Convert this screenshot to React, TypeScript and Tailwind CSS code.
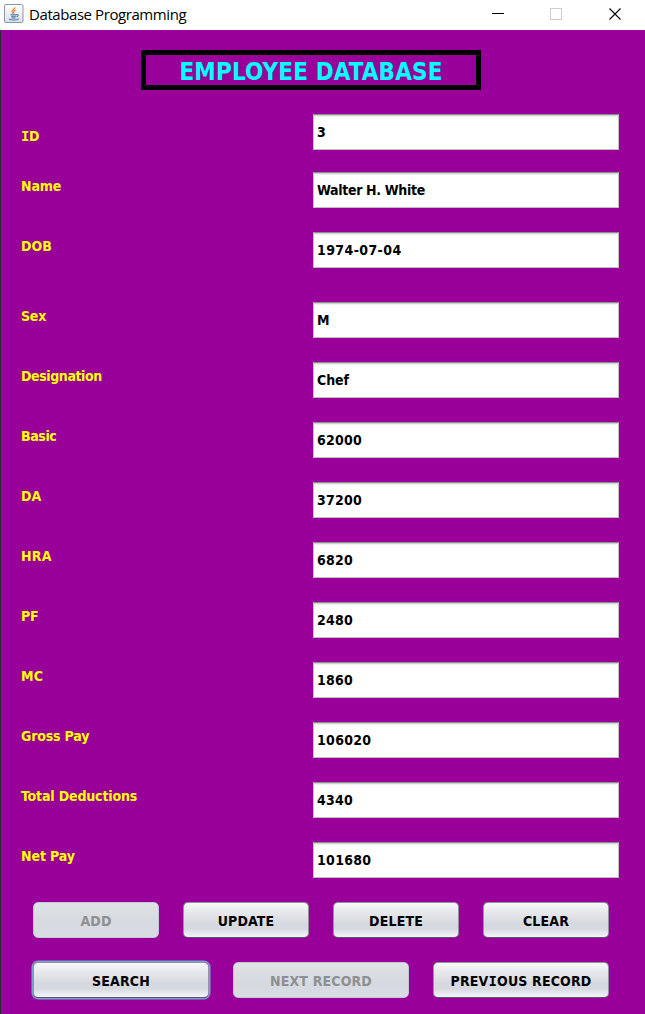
import type { ReactNode } from "react";

const FONT = "font-['DejaVu_Sans_Condensed','DejaVu_Sans',sans-serif] [font-stretch:condensed]";

/** Capital I with serifs, as bold form captions draw it. */
function SerifI() {
  return <span className="font-['DejaVu_Sans_Mono',monospace]">I</span>;
}

type Row = { label: ReactNode; value: string; gap: string; labelShift: string; tracking: string; valueTracking: string };

const rows: Row[] = [
  { label: <><SerifI />D</>, value: "3", gap: "mt-6", labelShift: "pt-2", tracking: "tracking-[-0.5px]", valueTracking: "tracking-[0.25px]" },
  { label: "Name", value: "Walter H. White", gap: "mt-[22px]", labelShift: "pb-2", tracking: "tracking-[-0.15px]", valueTracking: "tracking-[-0.33px]" },
  { label: "DOB", value: "1974-07-04", gap: "mt-6", labelShift: "pb-2", tracking: "tracking-[0.1px]", valueTracking: "tracking-[0.4px]" },
  { label: "Sex", value: "M", gap: "mt-[34px]", labelShift: "pb-2", tracking: "tracking-[-0.2px]", valueTracking: "tracking-[0px]" },
  { label: "Designation", value: "Chef", gap: "mt-6", labelShift: "pb-2", tracking: "tracking-[-0.4px]", valueTracking: "tracking-[-0.1px]" },
  { label: "Basic", value: "62000", gap: "mt-6", labelShift: "pb-2", tracking: "tracking-[-0.4px]", valueTracking: "tracking-[0.25px]" },
  { label: "DA", value: "37200", gap: "mt-6", labelShift: "pb-2", tracking: "tracking-[0px]", valueTracking: "tracking-[0.25px]" },
  { label: "HRA", value: "6820", gap: "mt-6", labelShift: "pb-2", tracking: "tracking-[0.3px]", valueTracking: "tracking-[0.25px]" },
  { label: "PF", value: "2480", gap: "mt-6", labelShift: "pb-2", tracking: "tracking-[-0.2px]", valueTracking: "tracking-[0.25px]" },
  { label: "MC", value: "1860", gap: "mt-6", labelShift: "pb-2", tracking: "tracking-[0.2px]", valueTracking: "tracking-[0.25px]" },
  { label: "Gross Pay", value: "106020", gap: "mt-6", labelShift: "pb-2", tracking: "tracking-[-0.17px]", valueTracking: "tracking-[0.3px]" },
  { label: "Total Deductions", value: "4340", gap: "mt-6", labelShift: "pb-2", tracking: "tracking-[-0.15px]", valueTracking: "tracking-[0.25px]" },
  { label: "Net Pay", value: "101680", gap: "mt-6", labelShift: "pb-2", tracking: "tracking-[-0.1px]", valueTracking: "tracking-[0.3px]" },
];

function FormRow({ row }: { row: Row }) {
  return (
    <div className={`flex h-9 ${row.gap}`}>
      <div className={`flex w-[292px] items-center whitespace-nowrap text-[#ffff00] ${row.labelShift} ${row.tracking}`}>
        <span>{row.label}</span>
      </div>
      <div
        className={`flex h-9 w-[306px] items-center border border-[#bfbfbf] border-t-[#8d8e8f] bg-white pl-[3px] text-black shadow-[inset_0_1px_0_#d4d4d4,inset_0_2px_0_#f0f0f0] ${row.valueTracking}`}
      >
        <span>{row.value}</span>
      </div>
    </div>
  );
}

type ButtonProps = { children: ReactNode; width: string; disabled?: boolean; focused?: boolean };

function FormButton({ children, width, disabled, focused }: ButtonProps) {
  const look = disabled
    ? "border-[#c3c8d0] bg-[linear-gradient(#dfe2e6,#d6d9df_60%,#d8dce5)] text-[#8e8f91]"
    : "border-[#92959d] border-b-[#535860] bg-[linear-gradient(#f8f9fa_0%,#e6e8eb_28%,#d6d9df_60%,#d6d9df_75%,#f3f5fa_100%)] text-black";
  const ring = focused ? "shadow-[0_0_0_1.5px_#73a4d1]" : "";
  return (
    <button
      disabled={disabled}
      className={`flex h-9 items-center justify-center whitespace-nowrap rounded-[5px] border pt-[2px] tracking-[0.15px] ${width} ${look} ${ring}`}
    >
      <span>{children}</span>
    </button>
  );
}

function JavaIcon() {
  return (
    <svg width="20" height="20" viewBox="0 0 20 20" fill="none">
      <defs>
        <linearGradient id="tile" x1="0" y1="0" x2="0" y2="1">
          <stop offset="0" stopColor="#ffffff" />
          <stop offset="1" stopColor="#d9e0e8" />
        </linearGradient>
      </defs>
      <rect x="0.5" y="0.5" width="18.5" height="18" rx="1.5" fill="url(#tile)" stroke="#8998a8" />
      <path d="M10.8 3.2C11.6 5 7 6.2 8.1 8.2L9.2 10M11.6 6.2C9.5 7.2 9.1 8 10 9.5" stroke="#ee8b45" strokeWidth="1.3" />
      <path d="M6.4 10.7H12.5M7 12.3H12M7.6 13.9H11.4M12.5 10.7C15 10.2 14.6 12.5 12.4 13M5 15C7 16.4 12.8 16.4 14.8 15" stroke="#527da2" strokeWidth="1.1" />
    </svg>
  );
}

function TitleBar() {
  return (
    <header className="flex h-[30px] items-start bg-white">
      <div className="ml-1 mt-1">
        <JavaIcon />
      </div>
      <h1 className="ml-[5px] mt-[4px] w-[463px] whitespace-nowrap font-['Open_Sans','Noto_Sans',sans-serif] text-[15px] leading-[21px] tracking-[-0.42px] text-black">
        Database Programming
      </h1>
      <svg className="mt-[7px]" width="133" height="14" viewBox="0 0 133 14" fill="none">
        <path d="M0 6.5H12" stroke="#000" />
        <rect x="58.5" y="1.5" width="11" height="11" stroke="#ccc" />
        <path d="M117.5 1.5L128.5 12.5M128.5 1.5L117.5 12.5" stroke="#000" strokeWidth="1.1" />
      </svg>
    </header>
  );
}

export default function App() {
  return (
    <div className="flex h-[1014px] w-[645px] flex-col overflow-hidden bg-[#990099]">
      <TitleBar />
      <main className={`flex-1 border-l border-[#2b2b2b] pl-5 text-[14px] font-bold leading-[17px] ${FONT}`}>
        <div className="ml-[120px] mt-5 flex h-10 w-[340px] items-center justify-center border-[5px] border-black pt-[3px] text-[24px] leading-[28px] tracking-[0.13px] text-[#00ffff]">
          <h2 className="whitespace-nowrap">EMPLOYEE DATABASE</h2>
        </div>
        <form>
          {rows.map((row) => (
            <FormRow key={row.value} row={row} />
          ))}
          <div className="ml-3 mt-6 flex gap-6">
            <FormButton width="w-[126px]" disabled>ADD</FormButton>
            <FormButton width="w-[126px]">UPDATE</FormButton>
            <FormButton width="w-[126px]">DELETE</FormButton>
            <FormButton width="w-[126px]">CLEAR</FormButton>
          </div>
          <div className="ml-3 mt-6 flex gap-6">
            <FormButton width="w-[176px]" focused>SEARCH</FormButton>
            <FormButton width="w-[176px]" disabled>NEXT RECORD</FormButton>
            <FormButton width="w-[176px]">PREV<SerifI />OUS RECORD</FormButton>
          </div>
        </form>
      </main>
    </div>
  );
}
